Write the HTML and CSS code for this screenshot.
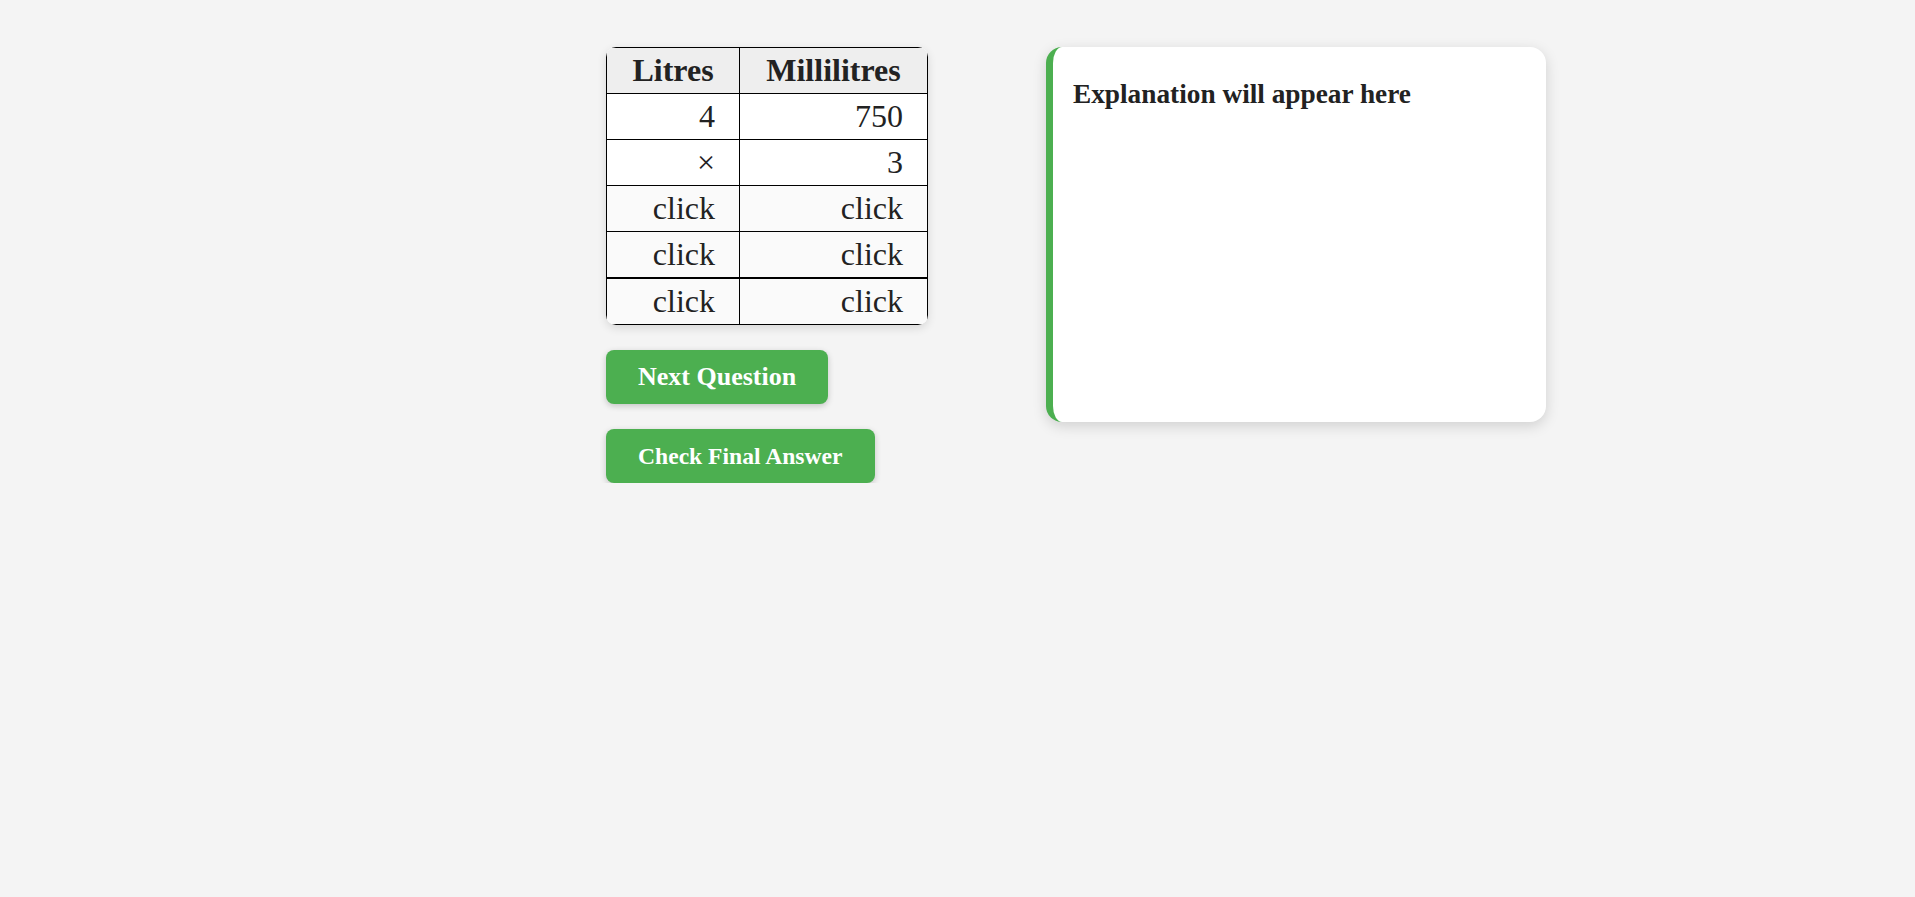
FILE: index.html
```html
<!DOCTYPE html>
<html>
<head>
<meta charset="utf-8">
<link rel="stylesheet" href="styles.css">
</head>
<body>
<main class="page">
  <section class="left">
    <div class="table-wrap">
      <table class="conv">
        <colgroup><col class="c1"><col class="c2"></colgroup>
        <thead>
          <tr><th>Litres</th><th>Millilitres</th></tr>
        </thead>
        <tbody>
          <tr><td>4</td><td>750</td></tr>
          <tr><td>×</td><td>3</td></tr>
          <tr class="input"><td>click</td><td>click</td></tr>
          <tr class="input"><td>click</td><td>click</td></tr>
          <tr class="input total"><td>click</td><td>click</td></tr>
        </tbody>
      </table>
    </div>
    <button class="btn btn-next">Next Question</button>
    <button class="btn btn-check">Check Final Answer</button>
  </section>
  <aside class="explain">
    <h3 class="explain-title">Explanation will appear here</h3>
  </aside>
</main>
</body>
</html>
```
FILE: styles.css
```css
html, body {
  margin: 0;
  padding: 0;
  background: #f4f4f4;
  font-family: "Liberation Serif", "Times New Roman", serif;
  color: #222;
}
.page {
  display: flex;
  align-items: flex-start;
  padding: 47px 0 0 606px;
}
.left {
  width: 440px;
  display: flex;
  flex-direction: column;
  align-items: flex-start;
  gap: 25px;
}
.table-wrap {
  border-radius: 10px;
  overflow: hidden;
  box-shadow: 0 3px 10px rgba(0,0,0,0.12);
}
.conv {
  border-collapse: collapse;
  table-layout: fixed;
  width: 321px;
  font-size: 32px;
  background: #fff;
}
.c1 { width: 133px; }
.c2 { width: 188px; }
.conv th, .conv td {
  border: 1px solid #000;
  line-height: 37px;
  padding: 4px 24px 4px 10px;
  text-align: right;
  color: #222;
}
.conv th {
  background: #eee;
  text-align: center;
  font-weight: bold;
  padding: 4px 10px;
}
.conv .input td { background: #fafafa; }
.conv .total td { border-top: 2px solid #000; }
.btn {
  background: #4caf50;
  color: #fff;
  border: none;
  border-radius: 8px;
  font-family: "Liberation Serif", "Times New Roman", serif;
  font-weight: bold;
  line-height: 30px;
  padding: 12px 32px;
  box-shadow: 0 2px 6px rgba(0,0,0,0.2);
  cursor: pointer;
}
.btn-next { font-size: 26px; }
.btn-check { font-size: 23.6px; }
.explain {
  width: 500px;
  height: 375px;
  box-sizing: border-box;
  background: #fff;
  border-left: 7px solid #4caf50;
  border-radius: 16px;
  box-shadow: 0 4px 14px rgba(0,0,0,0.15);
  padding: 18px 20px;
}
.explain-title {
  margin: 14px 0 0;
  font-size: 27.3px;
  font-weight: bold;
  color: #222;
}
```
